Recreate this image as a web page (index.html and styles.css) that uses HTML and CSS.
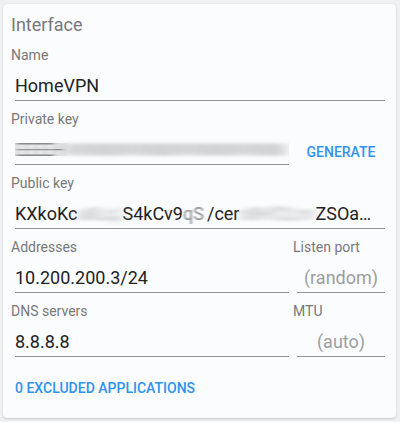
FILE: index.html
```html
<!DOCTYPE html>
<html>
<head>
<meta charset="utf-8">
<link rel="stylesheet" href="styles.css">
</head>
<body>
<svg class="defs" width="0" height="0" aria-hidden="true">
  <filter id="streak" x="-30%" y="-60%" width="160%" height="220%"><feGaussianBlur stdDeviation="3 0.35"/></filter>
  <filter id="smear" x="-30%" y="-60%" width="160%" height="220%"><feGaussianBlur stdDeviation="6 1.8"/></filter>
  <filter id="soft" x="-30%" y="-60%" width="160%" height="220%"><feGaussianBlur stdDeviation="1 0.5"/></filter>
</svg>
<div class="card">
  <div class="title">Interface</div>

  <div class="field">
    <div class="label">Name</div>
    <div class="input"><span class="value">HomeVPN</span></div>
  </div>

  <div class="row">
    <div class="field">
      <div class="label">Private key</div>
      <div class="input"><span class="blur b-pk1">EEEEHHHHHE</span><span class="blur b-pk2">WWMMWWMMWWMMWWMMWWMMWWMM</span></div>
    </div>
    <div class="btn-cell"><span class="btn">GENERATE</span></div>
  </div>

  <div class="field">
    <div class="label">Public key</div>
    <div class="input"><span class="value">KXkoKc</span><span class="blur b1">a8Lq23</span><span class="value">S4kCv9</span><span class="blur b2">qS</span><span class="value">/cer</span><span class="blur b3">s8Hf2Lm1Qw</span><span class="value">ZSOa…</span></div>
  </div>

  <div class="row">
    <div class="field">
      <div class="label">Addresses</div>
      <div class="input"><span class="value">10.200.200.3/24</span></div>
    </div>
    <div class="field">
      <div class="label">Listen port</div>
      <div class="input center"><span class="placeholder">(random)</span></div>
    </div>
  </div>

  <div class="row">
    <div class="field">
      <div class="label">DNS servers</div>
      <div class="input"><span class="value">8.8.8.8</span></div>
    </div>
    <div class="field">
      <div class="label">MTU</div>
      <div class="input center"><span class="placeholder">(auto)</span></div>
    </div>
  </div>

  <div class="excluded"><span class="btn">0 EXCLUDED APPLICATIONS</span></div>
</div>
</body>
</html>
```
FILE: styles.css
```css
html, body {
  margin: 0;
  padding: 0;
  background: #eff0f2;
}
body {
  width: 400px;
  height: 422px;
  overflow: hidden;
  font-family: Roboto, "Noto Sans", sans-serif;
}
.defs {
  position: absolute;
  width: 0;
  height: 0;
  overflow: hidden;
}
.card {
  margin: 4px 4px 0 3px;
  box-sizing: border-box;
  height: 414px;
  background: #fbfcfe;
  border-radius: 4px;
  box-shadow: 0 1px 2px rgba(0, 0, 0, 0.16), 0 0 1px rgba(0, 0, 0, 0.08);
  padding: 10px 11px 0 8px;
}
.title {
  font-size: 18px;
  line-height: 22px;
  color: #787878;
  margin-bottom: 11px;
}
.field {
  min-width: 0;
  margin-bottom: 10px;
}
.label {
  font-size: 14px;
  line-height: 16px;
  color: #787878;
}
.input {
  margin-left: 4px;
  padding: 13px 0 4px;
  border-bottom: 1px solid #939393;
  font-size: 18px;
  line-height: 20px;
  height: 20px;
  color: #222;
  white-space: nowrap;
  overflow: hidden;
}
.input.center {
  text-align: center;
}
.placeholder {
  color: #9e9e9e;
}
.row {
  display: grid;
  grid-template-columns: 1fr 92px;
  column-gap: 4px;
}
.blur {
  display: inline-block;
  vertical-align: top;
  height: 20px;
  overflow: hidden;
}
.b-pk1 {
  width: 48px;
  color: #7a7a7a;
  filter: url(#streak);
  letter-spacing: -1px;
}
.b-pk2 {
  width: 222px;
  color: #a8a8a8;
  filter: url(#smear);
  letter-spacing: -2px;
}
.b1 {
  width: 45px;
  filter: url(#smear);
  color: #b0b0b0;
}
.b2 {
  width: 24px;
  filter: url(#soft);
  color: #8a8a8a;
}
.b3 {
  width: 76px;
  filter: url(#smear);
  color: #b0b0b0;
}
.btn-cell {
  padding: 31px 0 0 4px;
  text-align: center;
}
.btn {
  font-size: 14px;
  line-height: 16px;
  font-weight: 500;
  color: #2f93ee;
}
.excluded {
  margin-top: 13px;
  padding-left: 4px;
  line-height: 16px;
}
```
